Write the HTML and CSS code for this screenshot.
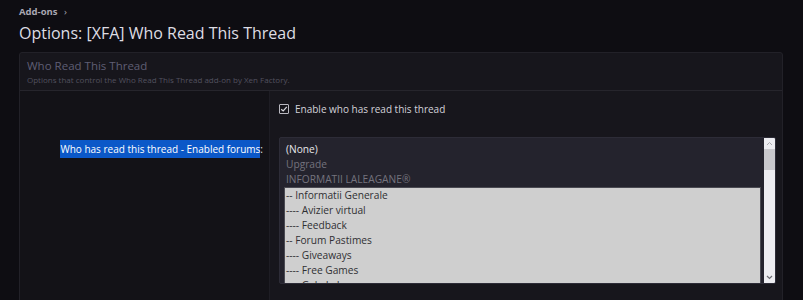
FILE: index.html
```html
<!DOCTYPE html>
<html lang="en">
<head>
    <meta charset="UTF-8">
    <title>Options: [XFA] Who Read This Thread</title>
    <link rel="stylesheet" href="styles.css">
</head>
<body>
  <div class="page">
    <div class="crumbs">Add-ons <span class="sep">&rsaquo;</span></div>
    <h1 class="title">Options: [XFA] Who Read This Thread</h1>

    <div class="block">
        <div class="block-header">
            <h2>Who Read This Thread</h2>
            <p>Options that control the Who Read This Thread add-on by Xen Factory.</p>
        </div>

        <div class="row row-check">
            <div class="row-label"></div>
            <div class="row-input">
                <label class="check">
                    <span class="box">
                        <svg width="8" height="8" viewBox="0 0 8 8"><path d="M1.2 4.2 L3.2 6 L6.8 1.8" fill="none" stroke="#d8d8de" stroke-width="1.2"/></svg>
                    </span>
                    Enable who has read this thread
                </label>
            </div>
        </div>

        <div class="row row-select">
            <div class="row-label">
                <span class="hl">Who has read this thread - Enabled forums</span>:
            </div>
            <div class="row-input">
                <div class="listbox">
                    <div class="list">
                        <div class="opt opt-main">(None)</div>
                        <div class="opt opt-off">Upgrade</div>
                        <div class="opt opt-off">INFORMATII LALEAGANE&reg;</div>
                        <div class="group">
                            <div class="opt">-- Informatii Generale</div>
                            <div class="opt">---- Avizier virtual</div>
                            <div class="opt">---- Feedback</div>
                            <div class="opt">-- Forum Pastimes</div>
                            <div class="opt">---- Giveaways</div>
                            <div class="opt">---- Free Games</div>
                            <div class="opt">---- Gala LaLeagane</div>
                        </div>
                    </div>
                    <div class="scroll">
                        <svg class="arrow" width="7" height="5" viewBox="0 0 7 5"><path d="M1 4 L3.5 1.5 L6 4" fill="none" stroke="#a9a9ae" stroke-width="1"/></svg>
                        <div class="thumb"></div>
                        <div class="track"></div>
                        <svg class="arrow" width="7" height="5" viewBox="0 0 7 5"><path d="M1 1 L3.5 3.5 L6 1" fill="none" stroke="#6c6c72" stroke-width="1.2"/></svg>
                    </div>
                </div>
            </div>
        </div>
    </div>
  </div>
</body>
</html>
```

FILE: styles.css
```css
*{
    margin: 0;
    padding: 0;
    box-sizing: border-box;
}
body{
    background: #0e0d12;
    font-family: "Open Sans", "Noto Sans", sans-serif;
    overflow: hidden;
}
.page{
    padding: 3px 20px 0 19px;
}
.crumbs{
    font-size: 9.5px;
    font-weight: 700;
    color: #a9a8b2;
    height: 17px;
    line-height: 17px;
}
.crumbs .sep{
    margin-left: 4px;
    font-weight: 400;
}
.title{
    font-size: 16px;
    font-weight: 400;
    color: #dedde4;
    line-height: 24px;
    margin-top: 1px;
}
.block{
    margin-top: 7px;
    background: #17161c;
    border: 1px solid #222128;
    border-radius: 3px;
}
.block-header{
    height: 38px;
    padding: 4px 7px 0;
    border-bottom: 1px solid #26252c;
}
.block-header h2{
    font-size: 11.5px;
    font-weight: 400;
    color: #5f5e74;
    line-height: 17px;
}
.block-header p{
    font-size: 8px;
    color: #52515f;
    line-height: 11px;
}
.row{
    display: grid;
    grid-template-columns: 250px 1fr;
}
.row-label{
    background: #131217;
    border-right: 1px solid #1e1d24;
    text-align: right;
    padding-right: 6px;
    font-size: 10px;
    color: #e8e8ee;
}
.row-input{
    padding-left: 9px;
}
.row-check .row-input{
    padding-top: 11px;
    height: 46px;
}
.check{
    display: flex;
    align-items: center;
    gap: 6px;
    font-size: 10px;
    color: #d3d2da;
}
.check .box{
    width: 10px;
    height: 10px;
    border: 1px solid #b9b8c0;
    border-radius: 1px;
    display: flex;
    justify-content: center;
    align-items: center;
}
.row-select{
    height: 200px;
}
.row-select .row-label{
    padding-top: 5px;
}
.hl{
    background: #0b58c8;
    color: #fff;
    padding: 2px 0;
}
.listbox{
    display: flex;
    width: 497px;
    height: 147px;
    background: #24232d;
    border: 1px solid #2d2c37;
    border-radius: 2px;
    overflow: hidden;
}
.list{
    flex: 1;
    padding: 4px 3px 0 4px;
    font-size: 10.2px;
    line-height: 15px;
}
.opt{
    padding-left: 2px;
    white-space: nowrap;
}
.opt-main{
    color: #e6e6ea;
}
.opt-off{
    color: #74737e;
}
.group{
    background: #cfcfcf;
    border: 1px solid #4a4a52;
    color: #2f2f33;
}
.group .opt{
    padding-left: 1px;
}
.scroll{
    width: 11px;
    background: #ededf1;
    display: flex;
    flex-direction: column;
    align-items: center;
    padding: 3px 0 3px;
}
.scroll .thumb{
    width: 11px;
    height: 21px;
    margin-top: 3px;
    background: #c9c9cd;
}
.scroll .track{
    flex: 1;
}
```
